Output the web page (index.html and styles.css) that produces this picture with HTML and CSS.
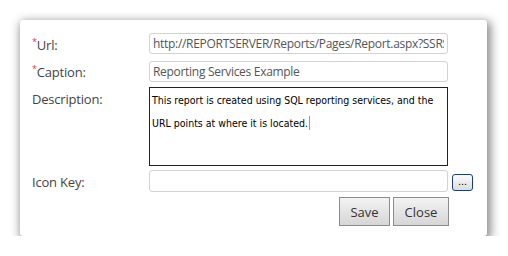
FILE: index.html
```html
<!DOCTYPE html>
<html lang="en">
<head>
    <meta charset="UTF-8">
    <title>Edit Link</title>
<link rel="stylesheet" href="styles.css">
</head>
<body>
    <div class="dialog">
        <form class="link-form" onsubmit="return false;">
            <label class="field-label" for="url"><span class="req">*</span>Url:</label>
            <input class="field-input" type="text" id="url" value="http://REPORTSERVER/Reports/Pages/Report.aspx?SSRS=1">
            <span></span>

            <label class="field-label" for="caption"><span class="req">*</span>Caption:</label>
            <input class="field-input" type="text" id="caption" value="Reporting Services Example">
            <span></span>

            <label class="field-label" for="description">Description:</label>
            <div class="desc-box" id="description">This report is created using SQL reporting services, and the<br>URL points at where it is located.<span class="caret"></span></div>
            <span></span>

            <label class="field-label" for="iconKey">Icon Key:</label>
            <input class="field-input" type="text" id="iconKey">
            <button type="button" class="pick-btn">...</button>

            <div class="actions">
                <button type="button" class="btn">Save</button>
                <button type="button" class="btn">Close</button>
            </div>
        </form>
    </div>
</body>
</html>
```

FILE: styles.css
```css
body {
    margin: 0;
    padding: 0;
    background: #ffffff;
    font-family: "Open Sans", "Noto Sans", sans-serif;
}

.dialog {
    width: 467px;
    height: 216px;
    margin: 20px 0 0 20px;
    box-sizing: border-box;
    background: #ffffff;
    border-radius: 3px;
    box-shadow: 2px 3px 10px 2px rgba(0, 0, 0, 0.45);
    padding: 13px 0 0 12px;
}

.link-form {
    display: grid;
    grid-template-columns: 117px 299px 25px;
    grid-auto-rows: auto;
    row-gap: 4px;
}

.field-label {
    padding-top: 2px;
    font-size: 13px;
    line-height: 21px;
    color: #444444;
    letter-spacing: -0.2px;
}

.req {
    color: #e0383e;
    font-size: 9px;
    vertical-align: top;
    line-height: 14px;
}

.field-input {
    height: 21px;
    box-sizing: border-box;
    margin: 0;
    padding: 0 3px;
    border: 1px solid #d2d2d2;
    border-radius: 3px;
    font-family: inherit;
    font-size: 12px;
    letter-spacing: -0.3px;
    color: #555555;
    outline: none;
}

#caption {
    margin-top: 1px;
}

#iconKey {
    height: 22px;
}

.desc-box {
    height: 79px;
    box-sizing: border-box;
    border: 1px solid #222222;
    padding: 1px 2px;
    overflow: hidden;
    white-space: nowrap;
    font-family: "DejaVu Sans Condensed", "DejaVu Sans", sans-serif;
    font-size: 10.5px;
    line-height: 23px;
    color: #000000;
}

.caret {
    display: inline-block;
    width: 1px;
    height: 14px;
    margin-left: 1px;
    vertical-align: -3px;
    background: #999999;
}

.pick-btn {
    width: 21px;
    height: 17px;
    margin: 4px 0 0 4px;
    padding: 0 0 4px;
    border: 1px solid #1e3f73;
    border-radius: 3px;
    background: linear-gradient(#fbfbfb, #dcdcdc);
    font-family: Arial, sans-serif;
    font-size: 11px;
    line-height: 10px;
    color: #000000;
}

.actions {
    grid-column: 1 / 3;
    display: flex;
    justify-content: flex-end;
    gap: 3px;
    margin-right: -1px;
}

.btn {
    height: 29px;
    padding: 0 8px;
    border: 1px solid #8c8c8c;
    background: linear-gradient(#f3f3f3, #d6d6d6);
    font-family: inherit;
    font-size: 13px;
    color: #333333;
}

.btn:first-child {
    width: 51px;
}

.btn:last-child {
    width: 56px;
}
```
